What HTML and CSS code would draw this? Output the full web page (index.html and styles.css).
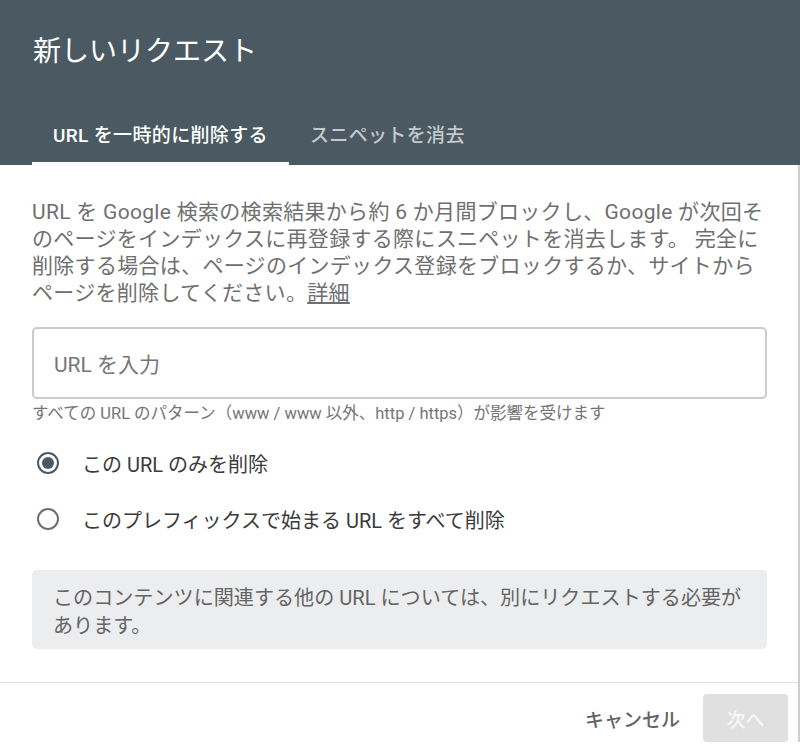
FILE: index.html
```html
<!DOCTYPE html>
<html lang="ja">
<head>
<meta charset="utf-8">
<title>新しいリクエスト</title>
<link rel="stylesheet" href="styles.css">
</head>
<body>
<div class="dialog">
  <header class="header">
    <h1 class="title">新しいリクエスト</h1>
    <nav class="tabs">
      <div class="tab active">URL を一時的に削除する</div>
      <div class="tab">スニペットを消去</div>
    </nav>
  </header>
  <div class="main">
    <div class="content">
      <p class="desc">URL を Google 検索の検索結果から約 6 か月間ブロックし、Google が次回そ<br>のページをインデックスに再登録する際にスニペットを消去します。 完全に<br>削除する場合は、ページのインデックス登録をブロックするか、サイトから<br>ページを削除してください。<a class="link" href="#">詳細</a></p>
      <div class="input">URL を入力</div>
      <div class="helper">すべての URL のパターン（www / www 以外、http / https）が影響を受けます</div>
      <div class="radios">
        <div class="radio-row">
          <span class="radio checked"></span>
          <span class="radio-label">この URL のみを削除</span>
        </div>
        <div class="radio-row">
          <span class="radio"></span>
          <span class="radio-label">このプレフィックスで始まる URL をすべて削除</span>
        </div>
      </div>
      <div class="notice">このコンテンツに関連する他の URL については、別にリクエストする必要が<br>あります。</div>
    </div>
    <footer class="footer">
      <button class="btn cancel">キャンセル</button>
      <button class="btn next">次へ</button>
    </footer>
  </div>
</div>
</body>
</html>
```

FILE: styles.css
```css
html, body {
  margin: 0;
  padding: 0;
  background: #ffffff;
}
body {
  font-family: "Roboto", "Noto Sans CJK JP", sans-serif;
  width: 800px;
  height: 750px;
  overflow: hidden;
}
.dialog {
  width: 800px;
}
.header {
  background: #4b5a62;
  height: 165px;
  display: flex;
  flex-direction: column;
}
.title {
  margin: 0;
  padding: 32px 0 29px 33px;
  font-size: 28px;
  line-height: 40px;
  font-weight: 400;
  color: #ffffff;
}
.tabs {
  display: flex;
  margin-left: 32px;
  height: 64px;
}
.tab {
  padding: 3px 21px 0;
  display: flex;
  align-items: center;
  font-size: 19px;
  font-weight: 500;
  letter-spacing: 0.35px;
  color: #c3c9cc;
  box-sizing: border-box;
  border-bottom: 3px solid transparent;
}
.tab.active {
  color: #ffffff;
  border-bottom-color: #ffffff;
}
.main {
  width: 798px;
  border-right: 2px solid #cfcfcf;
}
.content {
  padding: 34px 28px 33px 32px;
}
.desc {
  margin: 0;
  font-size: 21px;
  line-height: 27px;
  letter-spacing: 0.3px;
  color: #6f6f6f;
  white-space: nowrap;
}
.link {
  color: #6f6f6f;
  text-decoration: underline;
}
.input {
  margin-top: 20px;
  margin-right: 3px;
  height: 72px;
  box-sizing: border-box;
  border: 2px solid #cbcbcb;
  border-radius: 5px;
  padding-left: 20px;
  display: flex;
  align-items: center;
  font-size: 21px;
  color: #767676;
}
.helper {
  margin-top: 5px;
  font-size: 16.5px;
  line-height: 20px;
  color: #757575;
  white-space: nowrap;
}
.radios {
  margin-top: 11px;
}
.radio-row {
  height: 56px;
  display: flex;
  align-items: center;
  padding-left: 5px;
  gap: 23px;
}
.radio {
  width: 22px;
  height: 22px;
  box-sizing: border-box;
  border: 2px solid #6e6e6e;
  border-radius: 50%;
  display: flex;
  align-items: center;
  justify-content: center;
  flex: none;
}
.radio.checked {
  border-color: #4d5a61;
}
.radio.checked::after {
  content: "";
  width: 12px;
  height: 12px;
  border-radius: 50%;
  background: #4b5a62;
}
.radio-label {
  font-size: 20px;
  color: #3a3a3a;
}
.notice {
  margin-top: 23px;
  margin-right: 3px;
  background: #ecedef;
  border-radius: 5px;
  padding: 14px 14px 9px 21px;
  font-size: 20.1px;
  line-height: 28px;
  color: #646464;
  white-space: nowrap;
}
.footer {
  border-top: 1px solid #e2e2e2;
  padding: 11px 10px 0 0;
  display: flex;
  justify-content: flex-end;
  align-items: center;
  gap: 11px;
}
.btn {
  font-family: "Roboto", "Noto Sans CJK JP", sans-serif;
  font-size: 19px;
  font-weight: 500;
  border: none;
  border-radius: 4px;
  height: 48px;
  cursor: pointer;
}
.cancel {
  background: transparent;
  color: #5f6368;
  padding: 0 12px;
}
.next {
  background: #e0e0e0;
  color: #f7f7f7;
  padding: 0 23px;
  width: 85px;
}
```
